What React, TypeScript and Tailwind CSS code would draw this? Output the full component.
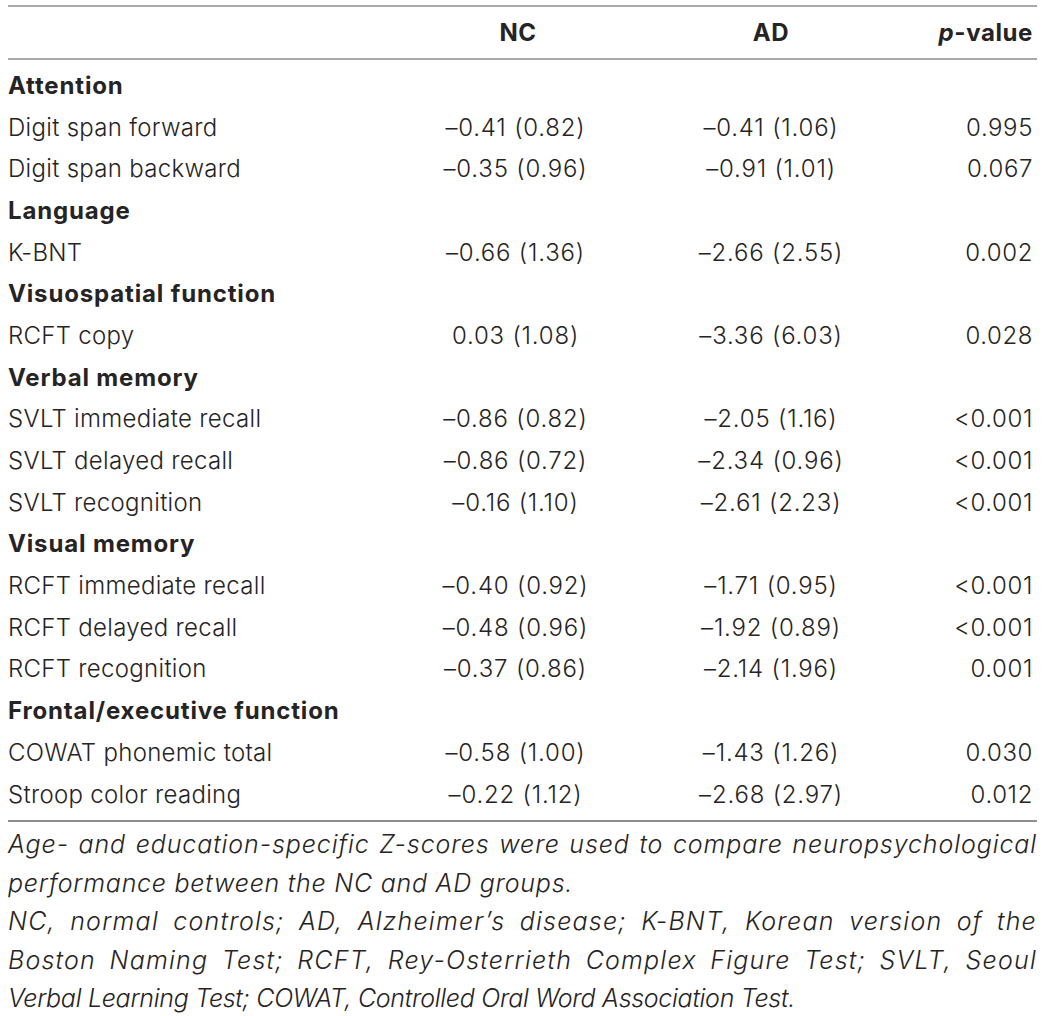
type Row = { label: string; nc?: string; ad?: string; p?: string; heading?: boolean };

const rows: Row[] = [
  { label: "Attention", heading: true },
  { label: "Digit span forward", nc: "–0.41 (0.82)", ad: "–0.41 (1.06)", p: "0.995" },
  { label: "Digit span backward", nc: "–0.35 (0.96)", ad: "–0.91 (1.01)", p: "0.067" },
  { label: "Language", heading: true },
  { label: "K-BNT", nc: "–0.66 (1.36)", ad: "–2.66 (2.55)", p: "0.002" },
  { label: "Visuospatial function", heading: true },
  { label: "RCFT copy", nc: "0.03 (1.08)", ad: "–3.36 (6.03)", p: "0.028" },
  { label: "Verbal memory", heading: true },
  { label: "SVLT immediate recall", nc: "–0.86 (0.82)", ad: "–2.05 (1.16)", p: "<0.001" },
  { label: "SVLT delayed recall", nc: "–0.86 (0.72)", ad: "–2.34 (0.96)", p: "<0.001" },
  { label: "SVLT recognition", nc: "–0.16 (1.10)", ad: "–2.61 (2.23)", p: "<0.001" },
  { label: "Visual memory", heading: true },
  { label: "RCFT immediate recall", nc: "–0.40 (0.92)", ad: "–1.71 (0.95)", p: "<0.001" },
  { label: "RCFT delayed recall", nc: "–0.48 (0.96)", ad: "–1.92 (0.89)", p: "<0.001" },
  { label: "RCFT recognition", nc: "–0.37 (0.86)", ad: "–2.14 (1.96)", p: "0.001" },
  { label: "Frontal/executive function", heading: true },
  { label: "COWAT phonemic total", nc: "–0.58 (1.00)", ad: "–1.43 (1.26)", p: "0.030" },
  { label: "Stroop color reading", nc: "–0.22 (1.12)", ad: "–2.68 (2.97)", p: "0.012" },
];

// footnote lines as set in the source, last line of each paragraph left aligned
const notes: { text: string; cls: string }[] = [
  {
    text: "Age- and education-specific Z-scores were used to compare neuropsychological",
    cls: "text-justify [text-align-last:justify] tracking-[0.9px]",
  },
  { text: "performance between the NC and AD groups.", cls: "tracking-[0.75px]" },
  {
    text: "NC, normal controls; AD, Alzheimer’s disease; K-BNT, Korean version of the",
    cls: "text-justify [text-align-last:justify] tracking-[1.2px]",
  },
  {
    text: "Boston Naming Test; RCFT, Rey-Osterrieth Complex Figure Test; SVLT, Seoul",
    cls: "text-justify [text-align-last:justify] tracking-[1.2px]",
  },
  { text: "Verbal Learning Test; COWAT, Controlled Oral Word Association Test.", cls: "tracking-[-0.3px]" },
];

const cols = "grid grid-cols-[392px_236px_270px_1fr] items-center";

export default function App() {
  return (
    <div className="w-[1045px] h-[1016px] bg-white px-2 pt-[5px] text-[#262324] font-['Inter','Liberation_Sans',sans-serif] text-[24px] tracking-[0.3px] font-light">
      <div className={`${cols} h-[55px] border-t-2 border-b-2 border-[#a9a9a9] font-bold tracking-[0.6px]`}>
        <div />
        <div className="text-center">NC</div>
        <div className="text-center">AD</div>
        <div className="text-right pr-1">
          <span className="italic">p</span>-value
        </div>
      </div>

      <div className="py-[5px] border-b-2 border-[#8f8f8f]">
        {rows.map((r) => (
          <div key={r.label} className={`${cols} h-[41.7px]`}>
            <div className={r.heading ? "font-bold tracking-[0.85px]" : ""}>{r.label}</div>
            <div className="text-center pr-[5px] tracking-[0.8px]">{r.nc}</div>
            <div className="text-center tracking-[0.8px]">{r.ad}</div>
            <div className="text-right pr-1 tracking-[0.6px]">{r.p}</div>
          </div>
        ))}
      </div>

      <div className="italic leading-[38.5px] pt-[3px] text-[25px]">
        {notes.map((n) => (
          <div key={n.text} className={n.cls}>
            {n.text}
          </div>
        ))}
      </div>
    </div>
  );
}
